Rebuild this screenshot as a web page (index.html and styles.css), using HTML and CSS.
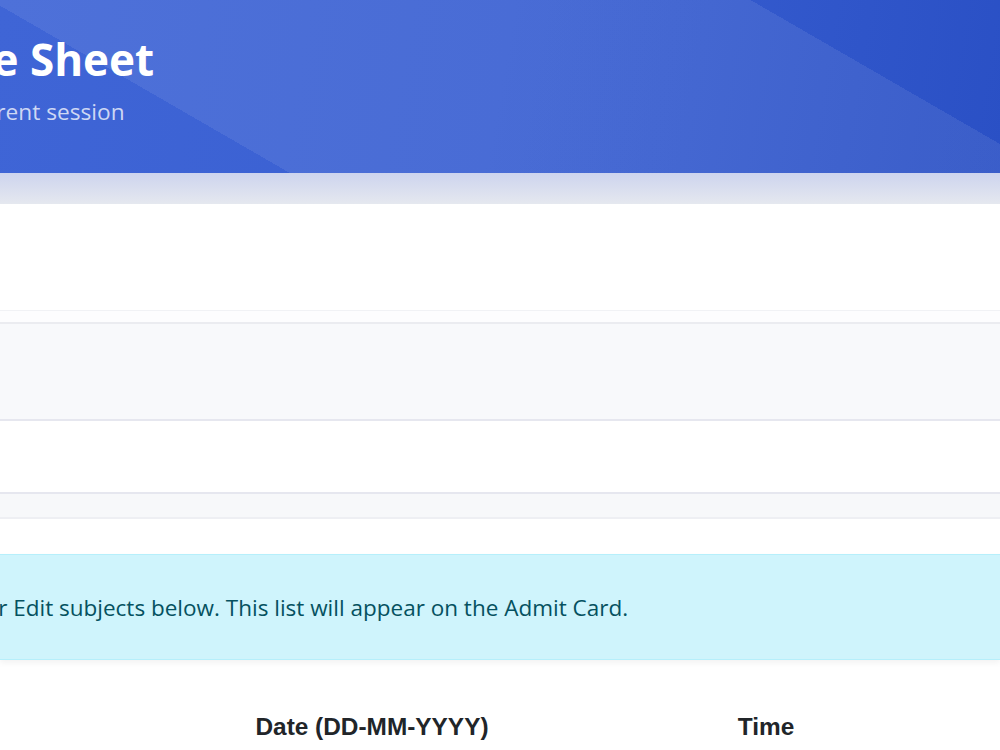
FILE: index.html
```html
<!DOCTYPE html>
<html lang="en">
<head>
    <meta charset="UTF-8">
    <title>Exam Date Sheet</title>
    <link rel="stylesheet" href="styles.css">
</head>
<body>
    <!-- Page Header -->
    <div class="page-header">
        <div class="container">
            <h1>Exam Date Sheet</h1>
            <p>Schedule for the current session</p>
        </div>
    </div>

    <!-- Main Content -->
    <div class="main">
        <div class="card">
            <div class="card-top"></div>
            <div class="strip"></div>
            <div class="panel"></div>
            <div class="row"></div>
            <div class="row-muted"></div>
            <div class="spacer"></div>

            <div class="alert-info">
                <div class="container">Add or Edit subjects below. This list will appear on the Admit Card.</div>
            </div>

            <div class="container">
                <div class="table-head">
                    <div class="th">Subject</div>
                    <div class="th">Date (DD-MM-YYYY)</div>
                    <div class="th">Time</div>
                    <div class="th">Action</div>
                </div>
            </div>
        </div>
    </div>
</body>
</html>
```

FILE: styles.css
```css
body {
    margin: 0;
    padding: 0;
    font-family: 'Open Sans', sans-serif;
    background: #e5e8ef;
    overflow: hidden;
    height: 750px;
}

/* content is scrolled sideways, its left part is off screen */
.container {
    margin-left: -400px;
    padding-left: 200px;
}

.page-header {
    height: 173px;
    box-sizing: border-box;
    padding-top: 24px;
    color: #fff;
    background:
        linear-gradient(30deg, rgba(255,255,255,0) 22.3%, rgba(255,255,255,0.08) 22.3%, rgba(255,255,255,0.08) 80.8%, rgba(255,255,255,0) 80.8%),
        linear-gradient(100deg, #3f65d6 0%, #3a60d2 50%, #2a50c5 100%);
}

.page-header .container {
    padding-left: 183px;
}

.page-header h1 {
    margin: 0;
    font-size: 44px;
    font-weight: 700;
    line-height: 70px;
}

.page-header p {
    margin: 3px 0 0;
    font-size: 22.7px;
    color: rgba(255, 255, 255, 0.75);
    line-height: 30px;
}

.main {
    padding-top: 31px;
    background: linear-gradient(#cdd4ee, #e5e8ef 31px);
}

.card {
    background: #fff;
    height: 546px;
}

.card-top {
    height: 106px;
    border-bottom: 1px solid #f1f2f5;
}

.strip {
    height: 11px;
    background: #fdfdfe;
    border-bottom: 2px solid #ebecf0;
}

.panel {
    height: 95px;
    background: #f8f9fb;
    border-bottom: 2px solid #e6e7ef;
}

.row {
    height: 71px;
    border-bottom: 2px solid #e6e7ef;
}

.row-muted {
    height: 23px;
    background: #f7f8fa;
    border-bottom: 2px solid #eeeff3;
}

.spacer {
    height: 35px;
}

.alert-info {
    background: #cff4fc;
    border-top: 1px solid #b6effb;
    border-bottom: 1px solid #b6effb;
    color: #055160;
    font-size: 22.5px;
    line-height: 30px;
    padding: 38px 0 36px;
    box-shadow: 0 3px 6px rgba(0, 0, 0, 0.05);
}

.alert-info .container {
    padding-left: 337px;
}

.table-head {
    display: grid;
    grid-template-columns: 373px 398px 390px 300px;
    padding-top: 52px;
}

.th {
    text-align: center;
    font-family: 'Liberation Sans', Arial, sans-serif;
    font-weight: 700;
    font-size: 24.4px;
    color: #212529;
    line-height: 30px;
}

.th:first-child {
    text-align: left;
}
```
